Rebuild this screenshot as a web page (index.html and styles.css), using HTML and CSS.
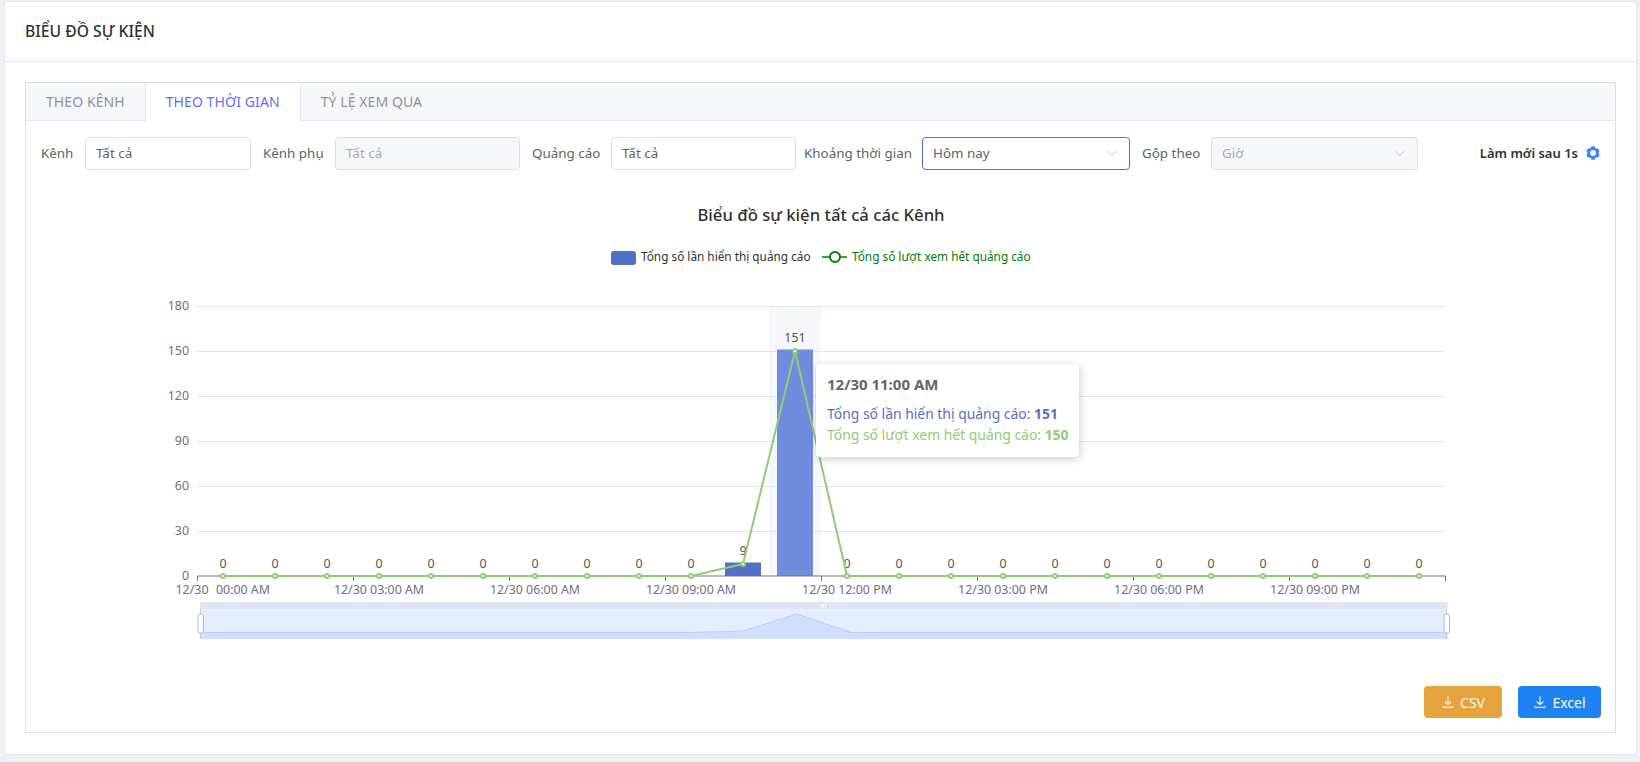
FILE: index.html
```html
<!DOCTYPE html>
<html lang="vi">
<head>
  <meta charset="UTF-8" />
  <meta name="viewport" content="width=device-width, initial-scale=1" />
  <title>Biểu đồ sự kiện</title>
  <link rel="stylesheet" href="styles.css">
</head>
<body>
  <main class="card">
    <header class="card-header">BIỂU ĐỒ SỰ KIỆN</header>
    <div class="card-body">
      <section class="tabs">
        <nav class="tab-bar">
          <a class="tab tab-first">THEO KÊNH</a>
          <a class="tab tab-active">THEO THỜI GIAN</a>
          <a class="tab tab-last">TỶ LỆ XEM QUA</a>
        </nav>
        <div class="tab-panel">
          <form class="filters">
            <label class="filter-label filter-label-first">Kênh</label>
            <div class="field">Tất cả</div>
            <label class="filter-label">Kênh phụ</label>
            <div class="field field-disabled">Tất cả</div>
            <label class="filter-label">Quảng cáo</label>
            <div class="field">Tất cả</div>
            <label class="filter-label filter-label-tight">Khoảng thời gian</label>
            <div class="field field-focus">Hôm nay
              <svg class="chevron" viewBox="0 0 12 7"><path d="M1 1l5 5 5-5" /></svg>
            </div>
            <label class="filter-label">Gộp theo</label>
            <div class="field field-disabled">Giờ
              <svg class="chevron" viewBox="0 0 12 7"><path d="M1 1l5 5 5-5" /></svg>
            </div>
            <div class="refresh">Làm mới sau 1s
              <svg class="gear" viewBox="0 0 24 24">
                <circle class="gear-ring" cx="12" cy="12" r="7.5" />
                <path class="gear-tooth" d="M9 0.5h6v5h-6z" />
                <path class="gear-tooth" d="M9 0.5h6v5h-6z" transform="rotate(60 12 12)" />
                <path class="gear-tooth" d="M9 0.5h6v5h-6z" transform="rotate(120 12 12)" />
                <path class="gear-tooth" d="M9 0.5h6v5h-6z" transform="rotate(180 12 12)" />
                <path class="gear-tooth" d="M9 0.5h6v5h-6z" transform="rotate(240 12 12)" />
                <path class="gear-tooth" d="M9 0.5h6v5h-6z" transform="rotate(300 12 12)" />
              </svg>
            </div>
          </form>

          <div class="chart">
            <!-- viewBox is in page coordinates so the numbers read like the screenshot -->
            <svg class="chart-svg" viewBox="26 170 1590 510">
              <text class="chart-title" x="821" y="221">Biểu đồ sự kiện tất cả các Kênh</text>

              <rect class="bar" x="611" y="251" width="25" height="14" rx="3" />
              <text class="legend-text" x="641" y="261">Tổng số lần hiển thị quảng cáo</text>
              <path class="legend-line" d="M822 257h25" />
              <circle class="legend-dot" cx="835" cy="257" r="5" />
              <text class="legend-text legend-text-green" x="852" y="261">Tổng số lượt xem hết quảng cáo</text>

              <rect class="band" x="769" y="306" width="52" height="270" />
              <path class="grid" d="M197 306.5h1248M197 351.5h1248M197 396.5h1248M197 441.5h1248M197 486.5h1248M197 531.5h1248" />

              <g class="y-labels">
                <text x="189" y="310">180</text>
                <text x="189" y="355">150</text>
                <text x="189" y="400">120</text>
                <text x="189" y="445">90</text>
                <text x="189" y="490">60</text>
                <text x="189" y="535">30</text>
                <text x="189" y="580">0</text>
              </g>

              <rect class="bar" x="725" y="562.5" width="36" height="13.5" />
              <rect class="bar-hover" x="777" y="349.5" width="36" height="226.5" />
              <path class="axis" d="M197.5 581v-5h1248v5M353.5 576v5M509.5 576v5M665.5 576v5M821.5 576v5M977.5 576v5M1133.5 576v5M1289.5 576v5" />

              <g class="x-labels">
                <text x="192" y="594">12/30</text>
                <text x="243" y="594">00:00 AM</text>
                <text x="379" y="594">12/30 03:00 AM</text>
                <text x="535" y="594">12/30 06:00 AM</text>
                <text x="691" y="594">12/30 09:00 AM</text>
                <text x="847" y="594">12/30 12:00 PM</text>
                <text x="1003" y="594">12/30 03:00 PM</text>
                <text x="1159" y="594">12/30 06:00 PM</text>
                <text x="1315" y="594">12/30 09:00 PM</text>
              </g>

              <g class="value-labels">
                <text x="223" y="568">0</text><text x="275" y="568">0</text><text x="327" y="568">0</text>
                <text x="379" y="568">0</text><text x="431" y="568">0</text><text x="483" y="568">0</text>
                <text x="535" y="568">0</text><text x="587" y="568">0</text><text x="639" y="568">0</text>
                <text x="691" y="568">0</text><text x="743" y="555">9</text><text x="795" y="342">151</text>
                <text x="847" y="568">0</text><text x="899" y="568">0</text><text x="951" y="568">0</text>
                <text x="1003" y="568">0</text><text x="1055" y="568">0</text><text x="1107" y="568">0</text>
                <text x="1159" y="568">0</text><text x="1211" y="568">0</text><text x="1263" y="568">0</text>
                <text x="1315" y="568">0</text><text x="1367" y="568">0</text><text x="1419" y="568">0</text>
              </g>

              <path class="series-line" d="M223 576H691L743 564 795 351 847 576H1419" />
              <g class="series-dots">
                <circle cx="223" cy="576" r="2" /><circle cx="275" cy="576" r="2" /><circle cx="327" cy="576" r="2" />
                <circle cx="379" cy="576" r="2" /><circle cx="431" cy="576" r="2" /><circle cx="483" cy="576" r="2" />
                <circle cx="535" cy="576" r="2" /><circle cx="587" cy="576" r="2" /><circle cx="639" cy="576" r="2" />
                <circle cx="691" cy="576" r="2" /><circle cx="743" cy="564" r="2" /><circle cx="795" cy="351" r="2" />
                <circle cx="847" cy="576" r="2" /><circle cx="899" cy="576" r="2" /><circle cx="951" cy="576" r="2" />
                <circle cx="1003" cy="576" r="2" /><circle cx="1055" cy="576" r="2" /><circle cx="1107" cy="576" r="2" />
                <circle cx="1159" cy="576" r="2" /><circle cx="1211" cy="576" r="2" /><circle cx="1263" cy="576" r="2" />
                <circle cx="1315" cy="576" r="2" /><circle cx="1367" cy="576" r="2" /><circle cx="1419" cy="576" r="2" />
              </g>

              <!-- range slider under the chart -->
              <rect class="zoom-top" x="200" y="602" width="1247.5" height="7" rx="1" />
              <rect class="zoom-body" x="200" y="609" width="1247.5" height="30" />
              <path class="zoom-area" d="M200 639V632.5H691L743 631 797 614 851 632.5H1447.5V639z" />
              <path class="zoom-area-line" d="M200 632.5H691L743 631 797 614 851 632.5H1447.5" />
              <path class="zoom-edge" d="M200.5 609V639M1446.5 609V639" />
              <rect class="zoom-handle" x="198" y="614" width="5.5" height="19" rx="2" />
              <rect class="zoom-handle" x="1444" y="614" width="5.5" height="19" rx="2" />
              <path class="zoom-grip" d="M821.5 604v4M823.5 604v4M825.5 604v4" />
            </svg>

            <div class="tooltip">
              <div class="tooltip-title">12/30 11:00 AM</div>
              <div class="tooltip-row tooltip-blue">Tổng số lần hiển thị quảng cáo: <b>151</b></div>
              <div class="tooltip-row tooltip-green">Tổng số lượt xem hết quảng cáo: <b>150</b></div>
            </div>
          </div>

          <div class="actions">
            <button type="button" class="btn btn-csv">
              <svg class="dl-icon" viewBox="0 0 16 16"><path d="M8 1.5V11M4 7.5L8 11l4-3.500M2.500 12.500V14h11v-1.500" /></svg>
              CSV
            </button>
            <button type="button" class="btn btn-excel">
              <svg class="dl-icon" viewBox="0 0 16 16"><path d="M8 1.5V11M4 7.5L8 11l4-3.500M2.500 12.500V14h11v-1.500" /></svg>
              Excel
            </button>
          </div>
        </div>
      </section>
    </div>
  </main>
</body>
</html>
```

FILE: styles.css
```css
:root {
  --font-sans: "Noto Sans", "Open Sans", sans-serif;
  --color-bg: #eef0f6;
  --color-border: #dcdfe6;
  --color-line: #e4e7ed;
  --color-soft: #f5f7fa;
  --color-text: #606266;
  --color-muted: #a8abb2;
  --color-dark: #303133;
  --color-bar: #5470c6;
  --color-green: #91cc75;
}

* {
  box-sizing: border-box;
}

body {
  margin: 0;
  font-family: var(--font-sans);
  font-size: 14px;
  background-color: var(--color-bg);
  color: var(--color-text);
}

.card {
  margin: 1px 3px 0 4px;
  height: 754px;
  background: #fff;
  border: 1px solid var(--color-line);
  border-radius: 4px;
}

.card-header {
  height: 60px;
  padding: 0 20px 2px;
  display: flex;
  align-items: center;
  border-bottom: 1px solid var(--color-line);
  font-size: 15.7px;
  font-weight: 500;
  color: var(--color-dark);
}

.card-body {
  padding: 20px;
}

.tabs {
  height: 651px;
  border: 1px solid var(--color-border);
}

.tab-bar {
  display: flex;
  height: 38px;
  background: var(--color-soft);
  border-bottom: 1px solid var(--color-line);
}

.tab {
  display: flex;
  align-items: center;
  padding: 0 20px 1px;
  height: 38px;
  letter-spacing: 0.08px;
  color: #909399;
}

.tab-active {
  background: #fff;
  color: #5f6ff2;
  border-left: 1px solid var(--color-line);
  border-right: 1px solid var(--color-line);
}

.tab-panel {
  padding: 16px 15px 0;
}

.filters {
  display: grid;
  grid-template-columns: 44px 166px 84px 185px 91px 185px 126px 208px 81px 207px 1fr;
  align-items: center;
  height: 33px;
  font-size: 13.4px;
}

.filter-label {
  padding: 0 0 2px 12px;
  white-space: nowrap;
}

.filter-label-first {
  padding-left: 0;
}

.filter-label-tight {
  padding-left: 8px;
}

.field {
  height: 33px;
  padding: 0 12px 2px 10px;
  display: flex;
  align-items: center;
  justify-content: space-between;
  border: 1px solid var(--color-border);
  border-radius: 4px;
  background: #fff;
}

.field-disabled {
  background: var(--color-soft);
  color: var(--color-muted);
}

.field-focus {
  border-color: #4a6cf0;
}

.chevron {
  width: 11px;
  height: 7px;
  margin-top: 2px;
  fill: none;
  stroke: #c0c4cc;
  stroke-width: 1;
}

.refresh {
  display: flex;
  justify-content: flex-end;
  align-items: center;
  gap: 8px;
  padding-bottom: 2px;
  font-weight: 600;
  font-size: 13px;
  color: var(--color-dark);
  white-space: nowrap;
}

.gear {
  width: 14px;
  height: 14px;
}

.gear-ring {
  fill: none;
  stroke: #3b82f6;
  stroke-width: 5;
}

.gear-tooth {
  fill: #3b82f6;
}

.chart {
  position: relative;
  margin: 0 -15px;
  height: 510px;
}

.chart-svg {
  display: block;
  width: 1590px;
  height: 510px;
  font-family: var(--font-sans);
}

.chart-title {
  font-size: 16.7px;
  font-weight: 500;
  fill: var(--color-dark);
  text-anchor: middle;
}

.legend-text {
  font-size: 11.8px;
  fill: #333;
}

.legend-text-green {
  fill: #008000;
}

.legend-line {
  stroke: #008000;
  stroke-width: 1.5;
}

.legend-dot {
  fill: #fff;
  stroke: #008000;
  stroke-width: 2;
}

.bar {
  fill: var(--color-bar);
}

.bar-hover {
  fill: #708ddd;
}

.band {
  fill: #f5f7fb;
}

.grid {
  fill: none;
  stroke: #e0e6f1;
  stroke-width: 1;
}

.axis {
  fill: none;
  stroke: #6e7079;
  stroke-width: 1;
}

.y-labels text {
  font-size: 12.4px;
  fill: #6e7079;
  text-anchor: end;
}

.x-labels text {
  font-size: 12.4px;
  fill: #6e7079;
  text-anchor: middle;
}

.value-labels text {
  font-size: 12.4px;
  fill: #555;
  text-anchor: middle;
}

.series-line {
  fill: none;
  stroke: var(--color-green);
  stroke-width: 2;
}

.series-dots circle {
  fill: #fff;
  stroke: var(--color-green);
  stroke-width: 2;
}

.zoom-top {
  fill: #dee4f2;
}

.zoom-body {
  fill: #e5ecfb;
}

.zoom-area {
  fill: #d2dffa;
}

.zoom-area-line {
  fill: none;
  stroke: #bccff8;
  stroke-width: 1;
}

.zoom-edge {
  stroke: #c4cde2;
  stroke-width: 1;
}

.zoom-handle {
  fill: #fff;
  stroke: #acb8d1;
  stroke-width: 1;
}

.zoom-grip {
  stroke: #fff;
  stroke-width: 1;
}

.tooltip {
  position: absolute;
  left: 790px;
  top: 194px;
  width: 263px;
  height: 93px;
  padding: 10px 0 0 11px;
  background: #fff;
  border-radius: 4px;
  box-shadow: 1px 2px 10px rgb(0 0 0 / 0.2);
  white-space: nowrap;
  font-size: 13.9px;
}

.tooltip-title {
  font-size: 15px;
  font-weight: 700;
  color: #666;
  line-height: 21px;
  margin-bottom: 8px;
}

.tooltip-row {
  line-height: 21px;
}

.tooltip-blue {
  color: var(--color-bar);
}

.tooltip-green {
  color: var(--color-green);
}

.actions {
  display: flex;
  justify-content: flex-end;
  gap: 16px;
  margin: 6px -1px 0 0;
}

.btn {
  display: flex;
  align-items: center;
  justify-content: center;
  gap: 5px;
  height: 32px;
  border: none;
  border-radius: 4px;
  color: #fff;
  font-family: var(--font-sans);
  font-size: 14px;
}

.btn-csv {
  width: 78px;
  background: #e6a23c;
}

.btn-excel {
  width: 83px;
  background: #1f82f2;
}

.dl-icon {
  width: 14px;
  height: 14px;
  fill: none;
  stroke: #fff;
  stroke-width: 1.2;
}
```
